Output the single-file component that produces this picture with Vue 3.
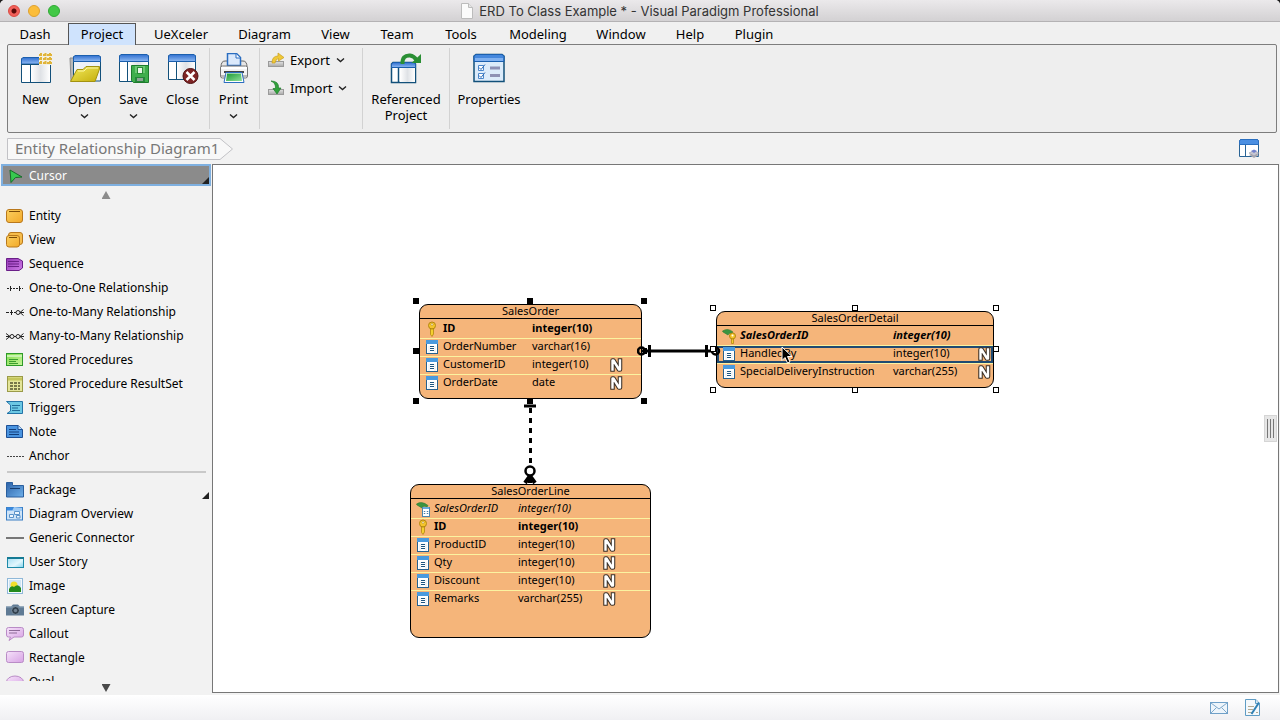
<script setup>
import { ref } from 'vue'

const tabs = ['Dash', 'Project', 'UeXceler', 'Diagram', 'View', 'Team', 'Tools', 'Modeling', 'Window', 'Help', 'Plugin']
const activeTab = ref('Project')

const fileActions = [
  { label: 'New', icon: 'r-new', menu: false },
  { label: 'Open', icon: 'r-open', menu: true },
  { label: 'Save', icon: 'r-save', menu: true },
  { label: 'Close', icon: 'r-close', menu: false },
]

const shapeTools = [
  { label: 'Entity', icon: 't-entity' },
  { label: 'View', icon: 't-view' },
  { label: 'Sequence', icon: 't-sequence' },
  { label: 'One-to-One Relationship', icon: 't-one-one' },
  { label: 'One-to-Many Relationship', icon: 't-one-many' },
  { label: 'Many-to-Many Relationship', icon: 't-many-many' },
  { label: 'Stored Procedures', icon: 't-proc' },
  { label: 'Stored Procedure ResultSet', icon: 't-result' },
  { label: 'Triggers', icon: 't-trigger' },
  { label: 'Note', icon: 't-note' },
  { label: 'Anchor', icon: 't-anchor' },
]
const commonTools = [
  { label: 'Package', icon: 't-package', more: true },
  { label: 'Diagram Overview', icon: 't-overview' },
  { label: 'Generic Connector', icon: 't-connector' },
  { label: 'User Story', icon: 't-story' },
  { label: 'Image', icon: 't-image' },
  { label: 'Screen Capture', icon: 't-camera' },
  { label: 'Callout', icon: 't-callout' },
  { label: 'Rectangle', icon: 't-rect' },
  { label: 'Oval', icon: 't-oval' },
]

const entities = [
  {
    name: 'SalesOrder', cls: 'order', handles: 'solid',
    columns: [
      { icon: 'c-key', name: 'ID', type: 'integer(10)', cls: 'pk' },
      { icon: 'c-col', name: 'OrderNumber', type: 'varchar(16)' },
      { icon: 'c-col', name: 'CustomerID', type: 'integer(10)', nullable: true },
      { icon: 'c-col', name: 'OrderDate', type: 'date', nullable: true },
    ],
  },
  {
    name: 'SalesOrderDetail', cls: 'detail', handles: 'hollow',
    columns: [
      { icon: 'c-fkkey', name: 'SalesOrderID', type: 'integer(10)', cls: 'pk fk' },
      { icon: 'c-col', name: 'HandledBy', type: 'integer(10)', nullable: true, cls: 'selected' },
      { icon: 'c-col', name: 'SpecialDeliveryInstruction', type: 'varchar(255)', nullable: true },
    ],
  },
  {
    name: 'SalesOrderLine', cls: 'line',
    columns: [
      { icon: 'c-fk', name: 'SalesOrderID', type: 'integer(10)', cls: 'fk' },
      { icon: 'c-key', name: 'ID', type: 'integer(10)', cls: 'pk' },
      { icon: 'c-col', name: 'ProductID', type: 'integer(10)', nullable: true },
      { icon: 'c-col', name: 'Qty', type: 'integer(10)', nullable: true },
      { icon: 'c-col', name: 'Discount', type: 'integer(10)', nullable: true },
      { icon: 'c-col', name: 'Remarks', type: 'varchar(255)', nullable: true },
    ],
  },
]
const handleSpots = ['nw', 'n', 'ne', 'w', 'e', 'sw', 's', 'se']
</script>

<template>
  <div class="app">
    <svg class="sprite" aria-hidden="true">
      <defs>
        <linearGradient id="g-bar" x1="0" y1="0" x2="0" y2="1"><stop offset="0" stop-color="#2f6fd0" /><stop offset="1" stop-color="#8fbaf2" /></linearGradient>
        <linearGradient id="g-page" x1="0" y1="0" x2="1" y2="0"><stop offset="0" stop-color="#fff" /><stop offset=".5" stop-color="#dfe2e6" /><stop offset="1" stop-color="#fff" /></linearGradient>
        <linearGradient id="g-folder" x1="0" y1="0" x2="1" y2="1"><stop offset="0" stop-color="#f3ea5c" /><stop offset="1" stop-color="#c4ae0c" /></linearGradient>
        <linearGradient id="g-green" x1="0" y1="0" x2="1" y2="1"><stop offset="0" stop-color="#1c9a34" /><stop offset="1" stop-color="#8fe09a" /></linearGradient>
        <linearGradient id="g-grey" x1="0" y1="0" x2="0" y2="1"><stop offset="0" stop-color="#e2e2e2" /><stop offset="1" stop-color="#a9a9a9" /></linearGradient>
        <linearGradient id="g-amber" x1="0" y1="0" x2="1" y2="1"><stop offset="0" stop-color="#fbd060" /><stop offset="1" stop-color="#f2a92a" /></linearGradient>
        <linearGradient id="g-purple" x1="0" y1="0" x2="1" y2="1"><stop offset="0" stop-color="#9236b4" /><stop offset="1" stop-color="#cf7ce8" /></linearGradient>
        <linearGradient id="g-blue" x1="0" y1="0" x2="1" y2="1"><stop offset="0" stop-color="#2c62a8" /><stop offset="1" stop-color="#6fb0ea" /></linearGradient>
        <linearGradient id="g-sky" x1="0" y1="0" x2="1" y2="1"><stop offset="0" stop-color="#9fdcf2" /><stop offset=".6" stop-color="#e2f7fd" /><stop offset="1" stop-color="#7fd2ec" /></linearGradient>
        <linearGradient id="g-lilac" x1="0" y1="0" x2="1" y2="1"><stop offset="0" stop-color="#f6e2fa" /><stop offset="1" stop-color="#d7a2e4" /></linearGradient>
        <linearGradient id="g-lime" x1="0" y1="0" x2="1" y2="1"><stop offset="0" stop-color="#7fdc4c" /><stop offset="1" stop-color="#c8f59c" /></linearGradient>
      </defs>

      <symbol id="r-new" viewBox="0 0 32 32">
        <path d="M1.500 29.500V6L3 4.500H30.500V29.500Z" fill="#fff" stroke="#12507a" />
        <rect x="11" y="12" width="19" height="17" fill="url(#g-page)" />
        <path d="M1.500 11V6L3 4.500H30.500V11Z" fill="url(#g-bar)" stroke="#1b5fae" />
        <path d="M1 11.500H31M10.500 12V29" stroke="#12507a" fill="none" />
        <path d="M19 0H32V12H19Z" fill="#f3f0e2" />
        <path d="M21 0V12M25.500 0V12M30 0V12M19 2H32M19 6H32M19 10H32" stroke="#e0b43a" stroke-width="2" stroke-dasharray="3 1" fill="none" />
      </symbol>
      <symbol id="r-open" viewBox="0 0 32 32">
        <path d="M1 5H5V28H2Z" fill="#b9b9b9" stroke="#8c8c8c" />
        <path d="M4.500 28V4L6 2.500H30L31.500 4V28Z" fill="#eef2f8" stroke="#12507a" />
        <path d="M4.500 8.500V4L6 2.500H30L31.500 4V8.500Z" fill="url(#g-bar)" stroke="#1b5fae" />
        <path d="M1.500 28.500 8 16.500H14L17 13.500H30.500V16L26 28.500Z" fill="url(#g-folder)" stroke="#a39210" />
        <path d="M9 18H15L18 15H29" stroke="#fbf7a6" fill="none" />
      </symbol>
      <symbol id="r-save" viewBox="0 0 32 32">
        <path d="M1.500 28.500V3L3 1.500H29L30.500 3V28.500Z" fill="#fff" stroke="#12507a" />
        <rect x="10" y="9" width="20" height="19" fill="url(#g-page)" />
        <path d="M1.500 8.500V3L3 1.500H29L30.500 3V8.500Z" fill="url(#g-bar)" stroke="#1b5fae" />
        <path d="M9.500 9V28" stroke="#12507a" />
        <path d="M13.500 12.500H30.500V29.500H15.500L13.500 27.500Z" fill="#3fae4c" stroke="#1d7c2c" />
        <rect x="17" y="13" width="10" height="7" fill="#6cc873" />
        <rect x="19.500" y="14.500" width="5" height="6" fill="#e8f7e8" stroke="#2a8a36" />
        <rect x="17" y="24" width="10" height="5" fill="#25863a" />
        <rect x="19" y="25" width="6" height="3" fill="#8fa596" />
      </symbol>
      <symbol id="r-close" viewBox="0 0 32 32">
        <path d="M1.500 26.500V3L3 1.500H27L28.500 3V26.500Z" fill="#fff" stroke="#12507a" />
        <rect x="10" y="9" width="18" height="17" fill="url(#g-page)" />
        <path d="M1.500 8.500V3L3 1.500H27L28.500 3V8.500Z" fill="url(#g-bar)" stroke="#1b5fae" />
        <path d="M9.500 9V26" stroke="#12507a" />
        <circle cx="23.500" cy="23" r="7.500" fill="#7e2424" stroke="#4e1010" />
        <path d="M19.500 19 27.500 27M27.500 19 19.500 27" stroke="#fff" stroke-width="2.500" />
      </symbol>
      <symbol id="r-print" viewBox="0 0 32 32">
        <path d="M3 14Q3 8 7 8H25Q29 8 29 14V17H3Z" fill="#e6e6e6" stroke="#666" />
        <path d="M9.500 15V.500H18.500L22.500 4.500V12.500H9.500Z" fill="#dbe9fb" stroke="#2a6dc0" stroke-width="1.500" />
        <path d="M18 1V5H22" fill="#fff" stroke="#2a6dc0" />
        <rect x="2.500" y="13" width="27" height="12" rx="2" fill="#f3f3f3" stroke="#777" />
        <rect x="3" y="14" width="26" height="2" fill="#fff" />
        <rect x="6" y="18" width="20" height="2" fill="#444" />
        <rect x="3" y="22" width="26" height="2" fill="#bbb" />
        <path d="M8 19.500H24L26 29.500H6Z" fill="#fff" stroke="#2a6dc0" />
        <path d="M9 20.500H23L24 28H8Z" fill="url(#g-green)" />
      </symbol>
      <symbol id="r-ref" viewBox="0 0 32 32">
        <path d="M1.500 29.500V11L3 9.500H24L25.500 11V29.500Z" fill="#fff" stroke="#12507a" stroke-width="1.500" />
        <rect x="10" y="15" width="15" height="14" fill="url(#g-page)" />
        <path d="M1.500 14.500V11L3 9.500H24L25.500 11V14.500Z" fill="url(#g-bar)" stroke="#1b5fae" />
        <path d="M8.500 15V29" stroke="#12507a" stroke-width="1.500" />
        <path d="M12.500 11Q12 2 20 2.500Q24 3 26.500 7" stroke="#2a8f34" stroke-width="4" fill="none" />
        <path d="M31 1V10H21.500Z" fill="#2a8f34" />
      </symbol>
      <symbol id="r-props" viewBox="0 0 32 32">
        <path d="M1 28.500V3L3 1.500H29L31 3V28.500Z" fill="#dcebfa" stroke="#12507a" stroke-width="1.500" />
        <path d="M1 8.500V3L3 1.500H29L31 3V8.500Z" fill="#4487dd" stroke="#1b5fae" />
        <rect x="2" y="5" width="28" height="3" fill="#7fb0ef" />
        <path d="M5.500 12.500H10.500V17.500H5.500ZM5.500 20.500H10.500V25.500H5.500Z" fill="#fff" stroke="#4a86cc" />
        <path d="M6 14.500 8 16.500 12 11.500M6 22.500 8 24.500 12 19.500" stroke="#2e6bb5" fill="none" />
        <path d="M17 15H27M17 22.500H27" stroke="#8e91b4" stroke-width="3" />
      </symbol>
      <symbol id="r-export" viewBox="0 0 16 16">
        <rect x=".5" y="9.500" width="15" height="5" fill="url(#g-grey)" stroke="#9a9a9a" />
        <path d="M4 11Q4 4 10 4V1L16 5.500 10.500 9V6.500Q8 6.500 7 11Z" fill="#efc838" stroke="#c89f1c" stroke-width=".7" />
      </symbol>
      <symbol id="r-import" viewBox="0 0 16 16">
        <rect x=".5" y="9.500" width="15" height="5" fill="url(#g-grey)" stroke="#9a9a9a" />
        <path d="M3 1Q11 1 10.500 8H13L9 14 5 8.500H7.500Q8 3 3 1Z" fill="#31a23b" stroke="#1d7b2a" stroke-width=".7" />
      </symbol>
      <symbol id="chev" viewBox="0 0 9 6"><path d="M1 1.500 4.500 4.500 8 1.500" fill="none" stroke="#222" stroke-width="1.400" /></symbol>

      <symbol id="t-cursor" viewBox="0 0 18 16"><path d="M4 2 16 9 9.500 9.500 5 14.500Z" fill="#36c94e" stroke="#166b28" /></symbol>
      <symbol id="t-entity" viewBox="0 0 18 16"><rect x=".5" y="1.500" width="16" height="13" rx="2.500" fill="url(#g-amber)" stroke="#b9781c" /><path d="M3 3.500H14" stroke="#7a4a08" /></symbol>
      <symbol id="t-view" viewBox="0 0 18 16"><rect x="2.500" y=".5" width="14" height="12" rx="2.500" fill="#f6bd4c" stroke="#b9781c" /><rect x=".5" y="3.500" width="13" height="11.500" rx="2.500" fill="url(#g-amber)" stroke="#b9781c" /><path d="M3 5.500H11" stroke="#7a4a08" /></symbol>
      <symbol id="t-sequence" viewBox="0 0 18 16"><path d="M.5 2.500H12L16.500 5V12L13 14.500H.5Z" fill="url(#g-purple)" stroke="#6a1f88" /><path d="M2 5.500H13M2 8H13M2 10.500H13" stroke="#6a1f88" /></symbol>
      <symbol id="t-one-one" viewBox="0 0 18 16"><path d="M1 8.500H17" stroke="#222" stroke-dasharray="2 1" /><path d="M4.500 6V11M13.500 6V11" stroke="#222" /></symbol>
      <symbol id="t-one-many" viewBox="0 0 18 16"><path d="M0 8.500H10" stroke="#222" stroke-dasharray="3 1" /><path d="M5.500 6V11M17.500 5.500 14 8.500 17.500 11.500M14 8.500H18" stroke="#222" fill="none" /><circle cx="12" cy="8.500" r="2" fill="none" stroke="#222" /></symbol>
      <symbol id="t-many-many" viewBox="0 0 18 16"><path d="M0 5.500 4 8.500 0 11.500M0 8.500H4M8 8.500H10M17.500 5.500 14 8.500 17.500 11.500M14 8.500H18" stroke="#222" fill="none" /><circle cx="6" cy="8.500" r="2" fill="none" stroke="#222" /><circle cx="12" cy="8.500" r="2" fill="none" stroke="#222" /></symbol>
      <symbol id="t-proc" viewBox="0 0 18 16"><rect x=".5" y="1.500" width="16" height="12" fill="url(#g-lime)" stroke="#2e9a2a" /><path d="M1 4H16" stroke="#c9f3b0" stroke-width="2" /><path d="M3 7.500H12M3 9.500H10M3 11.500H12" stroke="#3b9c30" /></symbol>
      <symbol id="t-result" viewBox="0 0 18 16"><rect x="1.500" y=".5" width="15" height="15" fill="#e4e59a" stroke="#9a9a48" /><path d="M2 3H16" stroke="#c5c65c" stroke-width="3" /><path d="M4 7H14M4 10H14M4 13H14" stroke="#77774a" stroke-width="2" stroke-dasharray="3 1" /></symbol>
      <symbol id="t-trigger" viewBox="0 0 18 16"><path d="M.5 1.500H16.500V13.500H1L4.500 11V5Z" fill="#6cc8e4" stroke="#2474a8" /><path d="M6 5.500H14M6 8H12M6 10.500H14" stroke="#1f6b96" /></symbol>
      <symbol id="t-note" viewBox="0 0 18 16"><path d="M.5 1.500H12L16.500 5.500V13.500H.5Z" fill="#4a94e0" stroke="#1d4f94" /><path d="M12 1.500V5.500H16.500" fill="#b9dcfa" stroke="#1d4f94" /><path d="M3 5.500H10M3 8H13M3 10.500H13" stroke="#123f7c" /></symbol>
      <symbol id="t-anchor" viewBox="0 0 18 16"><path d="M1 8.500H18" stroke="#444" stroke-dasharray="2 1" /></symbol>
      <symbol id="t-package" viewBox="0 0 18 16"><path d="M.5 15V.500H6.500V3.500H17.500V15Z" fill="url(#g-blue)" stroke="#2a5f9e" /><path d="M4 6.500H14" stroke="#163d70" /></symbol>
      <symbol id="t-overview" viewBox="0 0 18 16"><rect x=".5" y="1.500" width="16" height="12.500" fill="#cfe4f8" stroke="#3a7fc4" /><path d="M1 3H16" stroke="#3a8ae0" stroke-width="3" /><path d="M8 1 6 5H16V2Z" fill="#9fcaf4" /><path d="M8.500 5.500H13.500V8.500H8.500ZM3.500 8.500H7.500V11.500H3.500ZM10.500 9.500H14V12H10.500Z" fill="#eef6fd" stroke="#5b93c9" /></symbol>
      <symbol id="t-connector" viewBox="0 0 18 16"><path d="M0 8H18" stroke="#777" stroke-width="2" /></symbol>
      <symbol id="t-story" viewBox="0 0 18 16"><rect x="1.500" y="3.500" width="16" height="10" fill="url(#g-sky)" stroke="#1d8aa8" /><path d="M1 4H18" stroke="#147a94" stroke-width="2" /></symbol>
      <symbol id="t-image" viewBox="0 0 18 16"><rect x="1.500" y=".5" width="15" height="15" fill="#f4f9fd" stroke="#8fb8d8" /><rect x="3" y="2" width="12" height="12" fill="#cfe4f4" /><circle cx="8" cy="7" r="3.500" fill="#f0e02c" /><path d="M3 14V11Q5 7 8 9Q12 5 15 10V14Z" fill="#238a1c" /></symbol>
      <symbol id="t-camera" viewBox="0 0 18 16"><path d="M0 13.500V4.500H5L7 2.500H12L14 4.500H18V13.500Z" fill="#5f7a94" /><path d="M0 5H18" stroke="#8ba3b8" /><circle cx="9.500" cy="8.500" r="4" fill="#33414e" stroke="#7b91a5" /><circle cx="9.500" cy="8.500" r="1.700" fill="#708090" /></symbol>
      <symbol id="t-callout" viewBox="0 0 18 16"><path d="M2.500 1.500H15.500Q17.500 1.500 17.500 3.500V9Q17.500 11 15.500 11H8L3 14.500 4.500 11H2.500Q.5 11 .5 9V3.500Q.5 1.500 2.500 1.500Z" fill="url(#g-lilac)" stroke="#b98cc6" /><path d="M3 4.500H14M3 7H11" stroke="#8d6a98" /></symbol>
      <symbol id="t-rect" viewBox="0 0 18 16"><rect x=".5" y="1.500" width="17" height="11" rx="2" fill="url(#g-lilac)" stroke="#b98cc6" /></symbol>
      <symbol id="t-oval" viewBox="0 0 18 16"><ellipse cx="9" cy="8" rx="8.500" ry="6" fill="url(#g-lilac)" stroke="#b98cc6" /></symbol>

      <symbol id="c-col" viewBox="0 0 14 16"><rect x="1.500" y="1.500" width="11" height="13" fill="#fff" stroke="#26618f" /><rect x="1" y="1" width="12" height="4" fill="#4a9ade" /><path d="M5 7.500H9M5 9.500H9M5 11.500H9" stroke="#1d5580" /><path d="M4 14V7M10 14V7" stroke="#e3e9ee" /></symbol>
      <symbol id="c-key" viewBox="0 0 14 16"><circle cx="7" cy="4.500" r="3.500" fill="#f5c52c" stroke="#b38710" /><circle cx="7" cy="3.500" r="1" fill="#fff" stroke="#a37a0c" stroke-width=".5" /><path d="M5.500 8H8.500V13L7 15.500 5.500 13.500Z" fill="#f5d02f" stroke="#b38710" stroke-width=".8" /></symbol>
      <symbol id="c-fkkey" viewBox="0 0 14 16"><path d="M.5 3Q6-.5 11 4L10 6Q7 4 6 7L1 4Z" fill="#3b9440" stroke="#2b7a30" stroke-width=".6" /><circle cx="10.500" cy="8" r="3" fill="#f5c52c" stroke="#b38710" /><circle cx="10.500" cy="7.500" r="1" fill="#fff" /><path d="M9.500 11H11.500V15.500H9.500Z" fill="#f5d02f" stroke="#b38710" stroke-width=".8" /></symbol>
      <symbol id="c-fk" viewBox="0 0 14 16"><path d="M.5 3Q6-.5 12 4.500L11 6Q7 4 6 7L1 4Z" fill="#3b9440" stroke="#2b7a30" stroke-width=".6" /><rect x="6.500" y="6.500" width="7" height="9" fill="#fff" stroke="#4b86ae" /><rect x="7" y="6" width="6" height="2" fill="#6aabdd" /><path d="M8.500 10V14M11.500 10V14" stroke="#4b7da8" stroke-width="1.500" stroke-dasharray="1 1" /></symbol>
      <symbol id="c-null" viewBox="0 0 14 16"><path d="M3.500 12.500V3.500H4.500L10 12.500H11V3.500" fill="none" stroke="#3a3028" stroke-width="4.500" stroke-linecap="square" stroke-linejoin="round" /><path d="M3.500 12.500V3.500H4.500L10 12.500H11V3.500" fill="none" stroke="#fff" stroke-width="2.400" stroke-linecap="square" stroke-linejoin="round" /></symbol>
    </svg>

    <header class="titlebar">
      <div class="lights">
        <button class="light red" aria-label="Close window"></button>
        <button class="light amber" aria-label="Minimise window"></button>
        <button class="light green" aria-label="Zoom window"></button>
      </div>
      <svg class="doc" viewBox="0 0 12 16"><path d="M.5.5H7.500L11.500 4.500V15.500H.5Z" fill="#fbfbfb" stroke="#bcbcbc" /><path d="M7.500.5V4.500H11.500" fill="#e6e6e6" stroke="#bcbcbc" /></svg>
      <h1>ERD To Class Example * - Visual Paradigm Professional</h1>
    </header>

    <nav class="tabs">
      <button v-for="t in tabs" :key="t" :class="{ active: t === activeTab }" @click="activeTab = t">{{ t }}</button>
    </nav>

    <section class="ribbon">
      <div class="group files">
        <button v-for="a in fileActions" :key="a.label" class="big">
          <svg class="i32"><use :href="'#' + a.icon" /></svg>
          <span>{{ a.label }}</span>
          <svg v-if="a.menu" class="chev"><use href="#chev" /></svg>
        </button>
      </div>
      <div class="group print">
        <button class="big">
          <svg class="i32"><use href="#r-print" /></svg>
          <span>Print</span>
          <svg class="chev"><use href="#chev" /></svg>
        </button>
      </div>
      <div class="group stack">
        <button class="small"><svg class="i16"><use href="#r-export" /></svg>Export<svg class="chev"><use href="#chev" /></svg></button>
        <button class="small"><svg class="i16"><use href="#r-import" /></svg>Import<svg class="chev"><use href="#chev" /></svg></button>
      </div>
      <div class="group wide">
        <button class="big"><svg class="i32"><use href="#r-ref" /></svg><span>Referenced<br />Project</span></button>
      </div>
      <div class="group wide last">
        <button class="big"><svg class="i32"><use href="#r-props" /></svg><span>Properties</span></button>
      </div>
    </section>

    <div class="crumbs">
      <a class="crumb" href="#diagram">
        <svg viewBox="0 0 226 22"><path d="M.5.5H213L225.500 11 213 21.500H.5Z" fill="#f8f8f8" stroke="#c2c2c6" /></svg>
        <span>Entity Relationship Diagram1</span>
      </a>
      <button class="layout" aria-label="Diagram layers">
        <svg viewBox="0 0 20 20"><path d="M.5 17.500V2L1.500.5H18.500L19.500 2V17.500Z" fill="#fff" stroke="#2a6496" /><path d="M.5 5.500V2L1.500.5H18.500L19.500 2V5.500Z" fill="#4b8fe2" stroke="#2a6fc0" /><path d="M6.500 6V17" stroke="#2a6496" /><path d="M10 16 15 13.500 20 16 15 19Z" fill="#a9a9b2" /><path d="M10 14 15 11.500 20 14 15 17Z" fill="#c5c5d0" stroke="#8c8c9a" stroke-width=".5" /><path d="M12 12 15 10.500 18 12 15 14Z" fill="#7280cc" /></svg>
      </button>
    </div>

    <main class="work">
      <aside class="palette">
        <button class="cursor-tool"><svg class="tool-icon"><use href="#t-cursor" /></svg>Cursor</button>
        <button class="scroll up" aria-label="Scroll up"></button>
        <div class="tool-list">
          <button v-for="t in shapeTools" :key="t.label" class="tool"><svg class="tool-icon"><use :href="'#' + t.icon" /></svg>{{ t.label }}</button>
          <hr />
          <button v-for="t in commonTools" :key="t.label" class="tool" :class="{ more: t.more }"><svg class="tool-icon"><use :href="'#' + t.icon" /></svg>{{ t.label }}</button>
        </div>
        <button class="scroll down" aria-label="Scroll down"></button>
      </aside>

      <section id="diagram" class="canvas">
        <article v-for="e in entities" :key="e.name" class="entity" :class="e.cls">
          <h2>{{ e.name }}</h2>
          <table :aria-label="e.name">
            <tbody>
              <tr v-for="c in e.columns" :key="c.name" :class="c.cls">
                <td><svg class="col-icon"><use :href="'#' + c.icon" /></svg></td>
                <td>{{ c.name }}</td>
                <td>{{ c.type }}</td>
                <td><svg v-if="c.nullable" class="col-icon" role="img" aria-label="Nullable"><use href="#c-null" /></svg></td>
              </tr>
            </tbody>
          </table>
        </article>

        <svg class="link h" viewBox="0 0 84 14">
          <path d="M4 7H76" stroke="#000" stroke-width="3" />
          <path d="M6 4H10V10H6Z" fill="#000" />
          <path d="M12.500 1V13M69.500 1V13" stroke="#000" stroke-width="3" />
          <circle cx="4.500" cy="7" r="3.500" fill="none" stroke="#000" stroke-width="2.500" />
          <circle cx="78.500" cy="7" r="3.500" fill="none" stroke="#000" stroke-width="2.500" />
        </svg>
        <svg class="link v" viewBox="0 0 14 84">
          <path d="M1 6H13" stroke="#000" stroke-width="3" />
          <path d="M7.500 8V67" stroke="#000" stroke-width="3" stroke-dasharray="5 5" />
          <circle cx="7" cy="71" r="4.500" fill="#fff" stroke="#000" stroke-width="2.500" />
          <path d="M7 75V83M7 76 2 83M7 76 12 83" stroke="#000" stroke-width="4" fill="none" />
        </svg>

        <div v-for="e in entities.filter(x => x.handles)" :key="e.name" class="frame" :class="[e.cls, e.handles]">
          <i v-for="s in handleSpots" :key="s" :class="s"></i>
        </div>

        <svg class="pointer" viewBox="0 0 12 18"><path d="M1 1V14.500L4 11.500 6.500 17 9 16 6.500 10.500H11Z" fill="#000" stroke="#fff" /></svg>
        <div class="grip" aria-hidden="true"><i></i><i></i><i></i></div>
      </section>
    </main>

    <footer class="status">
      <button aria-label="Messages">
        <svg class="mail" viewBox="0 0 18 12"><rect x=".5" y=".5" width="17" height="11" fill="#eef5fb" stroke="#6fa0c8" /><path d="M1 1 9 7 17 1M1 11 6.500 5.500M17 11 11.500 5.500" fill="none" stroke="#7fa9cb" /></svg>
      </button>
      <button aria-label="Notes">
        <svg class="memo" viewBox="0 0 16 18"><path d="M.5.5H11L14.500 4.500V16.500H.5Z" fill="#f4f8fb" stroke="#5f9cc4" /><path d="M10.500.5V4.500H14.500" fill="#d5e7f3" stroke="#5f9cc4" /><path d="M3 7.500H9M3 10.500H8M3 13.500H7M11 13.500H13" stroke="#b3aa92" /><path d="M6.500 15 14 3.500" stroke="#2f80b4" stroke-width="2" /></svg>
      </button>
    </footer>
  </div>
</template>

<style>
html { background: #1c1c1c; }
</style>

<style scoped>
* { box-sizing: border-box; }
button { appearance: none; background: none; border: 0; padding: 0; margin: 0; font: inherit; color: inherit; }
svg { display: block; flex: none; }
.sprite { position: absolute; width: 0; height: 0; }

.app {
  display: flex; flex-direction: column; height: 100vh; overflow: hidden;
  background: #f2f2f2; border-radius: 5px 5px 0 0; color: #000;
  font: 13px/16px "Noto Sans", "Open Sans", sans-serif;
}

.titlebar {
  position: relative; flex: none; display: flex; align-items: center; justify-content: center; gap: 6px;
  height: 22px; background: linear-gradient(#ebe9eb, #d3d1d3); border-bottom: 1px solid #b4b2b4;
}
.titlebar h1 { margin: 0; font: 400 13px/20px Inter, sans-serif; color: #333; }
.doc { width: 12px; height: 16px; }
.lights { position: absolute; left: 8px; top: 5px; display: flex; gap: 8px; }
.light { width: 12px; height: 12px; border-radius: 50%; border: 1px solid; }
.red { background: radial-gradient(circle, #5a0a08 0 2px, #f2605a 3px); border-color: #d9483f; }
.amber { background: #fbbd3a; border-color: #dea030; }
.green { background: #42c846; border-color: #30a934; }

.tabs {
  flex: none; display: grid; grid-template-columns: 62px 72px 86px 81px 61px 62px 66px 88px 78px 60px 68px;
  height: 22px; padding: 1px 0 0 4px; background: #f0f0f0;
}
.tabs button { margin: 0 2px; padding-bottom: 2px; border: 1px solid transparent; border-bottom: 0; font-size: 13px; }
.tabs .active { position: relative; z-index: 1; height: 22px; background: #cfe3fd; border-color: #555; }

.ribbon {
  flex: none; display: flex; align-items: stretch; height: 89px; margin: 0 3px 0 7px; padding: 3px 0;
  background: #eee; border: 1px solid #7d7d7d; border-radius: 2px;
}
.group { display: flex; border-right: 1px solid #d2d2d2; }
.files { padding: 0 2px 0 3px; }
.last { border-right: 0; }
.big { display: flex; flex-direction: column; align-items: center; width: 49px; padding-top: 5px; }
.print { padding-right: 2px; }
.print .big { width: 47px; }
.wide .big { width: 86px; }
.last .big { width: 78px; }
.i32 { width: 32px; height: 32px; margin-bottom: 6px; }
.i16 { width: 16px; height: 16px; }
.chev { width: 9px; height: 6px; }
.big .chev { margin-top: 6px; }
.stack { flex-direction: column; width: 103px; padding-left: 8px; }
.small { display: flex; align-items: center; gap: 6px; height: 28px; margin-top: -2px; margin-bottom: 2px; }

.crumbs { flex: none; display: flex; align-items: center; justify-content: space-between; height: 31px; padding: 0 21px 0 7px; }
.crumb { position: relative; display: flex; align-items: center; width: 226px; height: 22px; padding-left: 8px; color: #777; font-size: 15px; text-decoration: none; white-space: nowrap; }
.crumb svg { position: absolute; inset: 0; width: 226px; height: 22px; }
.crumb span { position: relative; margin-bottom: 2px; }
.layout svg { width: 20px; height: 20px; }

.work { flex: 1; display: flex; min-height: 0; }
.palette { flex: none; display: flex; flex-direction: column; width: 212px; font-size: 12px; }
.cursor-tool {
  position: relative; flex: none; display: flex; align-items: center; gap: 5px; height: 22px; margin: 0 1px; padding: 1px 0 0 3px;
  background: #8b8b8b; border: 2px solid #7fb0e0; color: #fff;
}
.cursor-tool::after, .more::after {
  content: ""; position: absolute; right: 0; bottom: 0; width: 7px; height: 7px; background: #222; clip-path: polygon(100% 0, 100% 100%, 0 100%);
}
.more::after { bottom: 3px; }
.scroll { flex: none; display: flex; align-items: center; justify-content: center; height: 18px; }
.scroll::after { content: ""; width: 9px; height: 8px; }
.up::after { background: #8c8c8c; clip-path: polygon(50% 0, 100% 100%, 0 100%); }
.down { height: 14px; }
.down::after { background: #4a4a4a; clip-path: polygon(0 0, 100% 0, 50% 100%); }
.tool-list { flex: 1; min-height: 0; overflow: hidden; padding: 0 3px 0 6px; }
.tool { position: relative; display: flex; align-items: center; gap: 5px; width: 100%; height: 24px; text-align: left; white-space: nowrap; }
.tool-icon { width: 18px; height: 16px; }
hr { height: 2px; margin: 3px 3px 5px 1px; border: 0; background: #c9c9c9; }

.canvas { position: relative; flex: 1; min-width: 0; margin: 0 1px 2px 0; background: #fff; border: 1px solid #777; font-size: 11px; }
.entity { position: absolute; background: #f5b57a; border: 1px solid #000; border-radius: 9px; }
.entity h2 { margin: 0; height: 14px; border-bottom: 1px solid #000; font: 400 11px/11px "Noto Sans", sans-serif; text-align: center; }
.entity.order { left: 206px; top: 139px; width: 223px; height: 95px; }
.entity.detail { left: 503px; top: 146px; width: 278px; height: 77px; }
.entity.line { left: 197px; top: 319px; width: 241px; height: 154px; }
table, tbody { display: block; }
tr { display: grid; align-items: start; height: 18px; border-bottom: 1px solid #fbf3a0; padding-left: 5px; }
tr:first-child { height: 20px; padding-top: 2px; }
tr:last-child { border-bottom: 0; }
td { padding: 0; line-height: 14px; white-space: nowrap; }
.order tr { grid-template-columns: 18px 89px 77px 14px; }
.detail tr { grid-template-columns: 18px 153px 84px 14px; }
.line tr { grid-template-columns: 18px 84px 84px 14px; }
.pk { font-weight: 700; }
.fk { font-style: italic; }
.selected { box-shadow: inset 0 0 0 2px #1f4a72; }
.col-icon { width: 14px; height: 16px; }

.link, .pointer { position: absolute; }
.link.h { left: 424px; top: 179px; width: 84px; height: 14px; }
.link.v { left: 310px; top: 235px; width: 14px; height: 84px; }
.pointer { left: 568px; top: 181px; width: 12px; height: 18px; }

.frame { position: absolute; pointer-events: none; }
.frame.order { left: 203px; top: 136px; width: 228px; height: 100px; }
.frame.detail { left: 500px; top: 143px; width: 283px; height: 82px; }
.frame i { position: absolute; width: 6px; height: 6px; margin: -3px; background: #000; }
.frame.hollow i { background: #fff; border: 1px solid #000; }
.nw, .w, .sw { left: 0; }
.n, .s { left: 50%; }
.frame .ne, .frame .e, .frame .se { left: 100%; }
.nw, .n, .ne { top: 0; }
.w, .e { top: 50%; }
.sw, .s, .se { top: 100%; }
.order .e { display: none; }

.grip { position: absolute; right: 1px; top: 50%; display: flex; gap: 2px; width: 13px; height: 27px; margin-top: -14px; padding: 3px 2px; background: #e6e6e6; border: 1px solid #d5d5d5; }
.grip i { width: 1px; background: #777; }

.status { flex: none; display: flex; align-items: center; justify-content: flex-end; gap: 17px; height: 25px; padding-right: 19px; background: linear-gradient(#fff, #f0f0f3); }
.mail { width: 18px; height: 12px; }
.memo { width: 16px; height: 18px; }
</style>
